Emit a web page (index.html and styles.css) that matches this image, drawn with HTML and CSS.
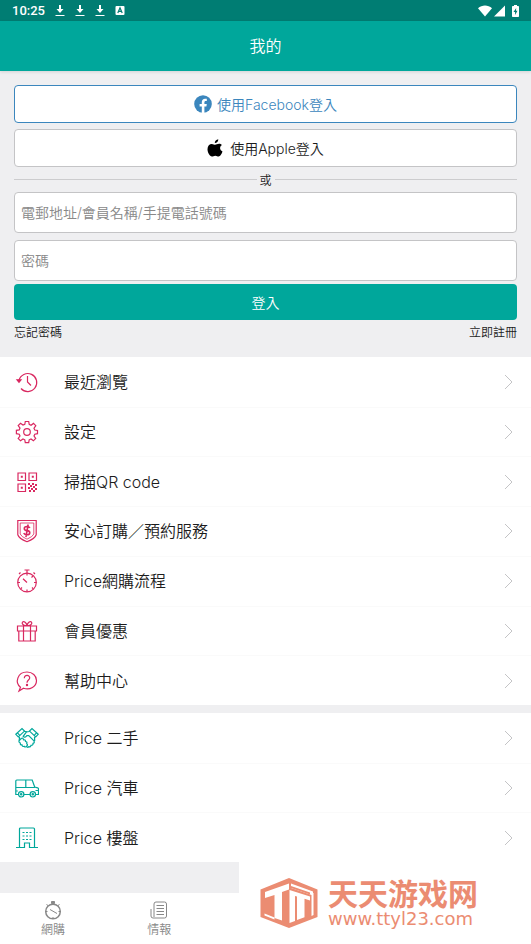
FILE: index.html
```html
<!DOCTYPE html>
<html lang="zh-Hant">
<head>
<meta charset="utf-8">
<meta name="viewport" content="width=device-width, initial-scale=1">
<title>我的</title>
<link rel="stylesheet" href="styles.css">
</head>
<body>
<div class="status">
  <div class="status-left">
    <span class="clock">10:25</span>
    <svg width="10" height="13" viewBox="0 0 10 13"><path d="M5 1v5" stroke="#fff" stroke-width="2"/><path d="M1.500 5h7L5 9z" fill="#fff"/><path d="M.5 11.500h9" stroke="#fff"/></svg>
    <svg width="10" height="13" viewBox="0 0 10 13"><path d="M5 1v5" stroke="#fff" stroke-width="2"/><path d="M1.500 5h7L5 9z" fill="#fff"/><path d="M.5 11.500h9" stroke="#fff"/></svg>
    <svg width="10" height="13" viewBox="0 0 10 13"><path d="M5 1v5" stroke="#fff" stroke-width="2"/><path d="M1.500 5h7L5 9z" fill="#fff"/><path d="M.5 11.500h9" stroke="#fff"/></svg>
    <svg width="10" height="13" viewBox="0 0 10 13"><rect x=".5" y="2" width="9" height="9" rx="1" fill="#fff"/><path d="M2.800 9 5 3.800 7.200 9M3.700 7.400h2.600" fill="none" stroke="#007d73" stroke-width="1.200"/></svg>
  </div>
  <div class="status-right">
    <svg width="14" height="12" viewBox="0 0 14 12"><path d="M0 3.200C4-.3 10-.3 14 3.200L7 11.500z" fill="#fff"/></svg>
    <svg width="12" height="12" viewBox="0 0 12 12"><path d="M11 .5v11H0z" fill="#fff"/></svg>
    <svg class="battery" width="7" height="12" viewBox="0 0 7 12"><path d="M2 0h3v1h1.200q.8 0 .8.8v9.400q0 .8-.8.8H.8Q0 12 0 11.200V1.800Q0 1 .8 1H2z" fill="#fff"/><path d="M4.200 3 1.500 7h1.600v3L5.500 5.800H4z" fill="#007d73"/></svg>
  </div>
</div>
<header class="title-bar"><h1>我的</h1></header>

<main>
  <form class="login">
    <button type="button" class="social facebook">
      <svg width="18" height="18" viewBox="0 0 18 18"><circle cx="9" cy="9" r="8.800" fill="#3b86bd"/><path d="M7.800 18v-6.400H5.600V9h2.200V7.200c0-2.300 1.300-3.500 3.300-3.500.9 0 1.700.1 1.700.1v2.100h-1c-1.100 0-1.400.7-1.400 1.400V9h2.400l-.4 2.600h-2V18z" fill="#fff"/></svg>
      <span>使用Facebook登入</span>
    </button>
    <button type="button" class="social apple">
      <svg width="16" height="18" viewBox="0 0 16 18"><path d="M11.300.2c.1 2-1.600 3.900-3.500 3.800C7.600 2.200 9.400.3 11.300.2zM14.900 6.100c-2.700 1.700-2.200 5.200.6 6.400-.7 2-2.200 5-3.900 5-1.300 0-1.700-.8-3.300-.8s-2.100.8-3.300.8C2.800 17.600.5 13.500.5 10.200c0-3.400 2.100-5.300 4.300-5.300 1.400 0 2.400.9 3.400.9.900 0 2.200-1 3.900-1 1 0 2.100.4 2.800 1.300z" fill="#000"/></svg>
      <span>使用Apple登入</span>
    </button>
    <div class="divider"><span>或</span></div>
    <input class="field" type="text" aria-label="電郵地址/會員名稱/手提電話號碼" placeholder="電郵地址/會員名稱/手提電話號碼">
    <input class="field" type="password" aria-label="密碼" placeholder="密碼">
    <button type="submit" class="submit">登入</button>
    <div class="links"><a href="#">忘記密碼</a><a href="#">立即註冊</a></div>
  </form>

  <nav class="menu account">
    <a href="#"><svg class="icon" viewBox="0 0 24 24"><path d="M4 10.500A9 9 0 1 1 6 18.500M12.500 6v6l3.500 3.500"/><path d="M2 9.800h4L4 12.300z" fill="currentColor"/></svg><span>最近瀏覽</span><svg class="chevron" viewBox="0 0 9 16"><path d="m1 1 7 7-7 7"/></svg></a>
    <a href="#"><svg class="icon" viewBox="0 0 24 24"><circle cx="12" cy="12" r="3.300"/><path d="m10.300 1.500h3.400l.5 2.900 1.800.8 2.500-1.800 2.300 2.300L19 8.200l.8 1.800 2.700.4v3.300l-2.700.5-.8 1.800 1.700 2.500-2.300 2.300L16 19l-1.800.8-.5 2.800h-3.400l-.5-2.800L8 19l-2.500 1.800-2.300-2.300L5 16l-.8-1.800-2.800-.5v-3.400l2.800-.4L5 8.100 3.200 5.600l2.300-2.300L8 5.100l1.800-.8z"/></svg><span>設定</span><svg class="chevron" viewBox="0 0 9 16"><path d="m1 1 7 7-7 7"/></svg></a>
    <a href="#"><svg class="icon" viewBox="0 0 24 24"><path d="M3 3h7.500v7.500H3zM14 3h7.500v7.500H14zM3 14h7.500v7.500H3z"/><path fill="currentColor" stroke="none" d="M5.800 5.800h2v2h-2zM16.800 5.800h2v2h-2zM5.800 16.800h2v2h-2zM13 13h2v2h-2zM17 13h2v2h-2zM20 14h2v2h-2zM15 15h2v2h-2zM18 16h2v2h-2zM13 17h2v2h-2zM16 18h2v2h-2zM20 18h2v2h-2zM14 20h2v2h-2zM18 20h2v2h-2z"/></svg><span>掃描QR code</span><svg class="chevron" viewBox="0 0 9 16"><path d="m1 1 7 7-7 7"/></svg></a>
    <a href="#"><svg class="icon" viewBox="0 0 24 24"><path d="M2.800 1.500h18.400v14.200Q20 19.500 12 22.700 4 19.500 2.800 15.700z"/><path d="M5.200 4h13.600v11Q18 17.500 12 20.200 6 17.500 5.200 15z" stroke-width=".8"/><path stroke-width="1.600" d="M15 8.800Q13.800 7.500 12 7.500c-3.600 0-3.600 3.700 0 4.100 4.100.5 3.300 4.200 0 4.200-1.600 0-2.700-.6-3.300-1.600M13.200 5.500l-2.300 12.500"/></svg><span>安心訂購／預約服務</span><svg class="chevron" viewBox="0 0 9 16"><path d="m1 1 7 7-7 7"/></svg></a>
    <a href="#"><svg class="icon" viewBox="0 0 24 24"><circle cx="12" cy="13.500" r="9.300"/><path d="M12 6.500V1M9.500 1h5M5.500 3.500 4 5M18.500 3.500 20 5M8 9.800l4 3.700M12 20.500v2.300M5 13.500H2.700M19 13.500h2.300M16.500 8.500 18 7M17 18.500l1.300 1.300M7 18.500l-1.300 1.300"/></svg><span>Price網購流程</span><svg class="chevron" viewBox="0 0 9 16"><path d="m1 1 7 7-7 7"/></svg></a>
    <a href="#"><svg class="icon" viewBox="0 0 24 24"><path d="M2.500 7h19v5h-19zM3.800 12v10h16.400V12M8.500 7v15M15.500 7v15M12 6.500C8 7 6.500 4.500 7.500 3.200 9 1.500 11.500 4 12 6.500c.5-2.500 3-5 4.500-3.300C17.500 4.500 16 7 12 6.500z"/></svg><span>會員優惠</span><svg class="chevron" viewBox="0 0 9 16"><path d="m1 1 7 7-7 7"/></svg></a>
    <a href="#"><svg class="icon" viewBox="0 0 24 24"><path d="M5.500 18.200C-.5 13.500 2.500 3 12 3c5.500 0 9.500 3.700 9.500 8.400 0 6-6.500 10.300-13 7.800L4 22z"/><path d="M9.300 9.200c0-4 5.700-3.500 5.400-.2-.2 2-2.700 2.200-2.700 4.700"/><circle cx="12" cy="16" r=".6" fill="currentColor"/></svg><span>幫助中心</span><svg class="chevron" viewBox="0 0 9 16"><path d="m1 1 7 7-7 7"/></svg></a>
  </nav>

  <nav class="menu sites">
    <a href="#"><svg class="icon" viewBox="0 0 24 24"><path d="M.8 8.300 7 2.500l2.500 2.600-6.200 5.800zM23.200 8.300 17 2.500l-2.500 2.600 6.200 5.800zM2.500 6.800l2.300 2.500M21.500 6.800l-2.300 2.500M9.500 5.500h2.200M14.300 5.500l-2.800.3-3.300 4.500q1.600 2 3.700-.7h1.800l5 5q1.500 2-.7 2.800.2 2-2 2-.4 1.800-2.200 1.300-1 1.300-2.300 0M4.500 11l-.3 3.500M19.500 11l.2 3.500-1 .5"/><path d="m4.200 14.500 2-2q2-1 2.300 1.300 2-.3 2 1.700 2 .2 1.200 2.200 1.500 1 .2 2.300-1.500 1.800-2.700.3-1.900.7-2.200-1.400-2 .1-1.700-1.900-1.900-.5-1.100-2.500z"/></svg><span>Price 二手</span><svg class="chevron" viewBox="0 0 9 16"><path d="m1 1 7 7-7 7"/></svg></a>
    <a href="#"><svg class="icon" viewBox="0 0 24 24"><path d="M3.500 18.500H.8V5q0-1 1-1h15.400l2.500 7 3 .8q.8.300.8 1.200v5.500h-3M8.700 18.500h6.600M.8 11.500h19M10.800 4v7.500M20.500 14.500h2.800M.8 15h2"/><circle cx="6.200" cy="18.300" r="2.700"/><circle cx="17.800" cy="18.300" r="2.700"/><circle cx="6.200" cy="18.300" r=".7"/><circle cx="17.800" cy="18.300" r=".7"/></svg><span>Price 汽車</span><svg class="chevron" viewBox="0 0 9 16"><path d="m1 1 7 7-7 7"/></svg></a>
    <a href="#"><svg class="icon" viewBox="0 0 24 24"><path d="M1 21.500h8.500v-4.500h5v4.500H23M4.500 21.500V3q0-1 1-1h13q1 0 1 1v18.500"/><path stroke-dasharray="2 1.500" d="M7.500 6.500h9M7.500 10h9M7.500 13.500h9"/></svg><span>Price 樓盤</span><svg class="chevron" viewBox="0 0 9 16"><path d="m1 1 7 7-7 7"/></svg></a>
  </nav>
</main>

<footer>
  <nav class="tabs">
    <a href="#"><svg width="20" height="20" viewBox="0 0 20 20"><circle cx="10" cy="11.500" r="7.300" stroke-width="1.500"/><path d="M8.500 1.500h3v2h-3z" fill="currentColor"/><path d="m3.500 4.500 1.500 1M16.500 4.500l-1.500 1M7 9.500l7 4M10 17v1.500M3 11.500h1.500M15.500 11.500H17"/></svg><span>網購</span></a>
    <a href="#"><svg width="20" height="20" viewBox="0 0 20 20"><path d="M5 17V4q0-2 2-2h8.500q2 0 2 2v12q0 2-2 2H4q-2 0-2-2V9M7.500 5.500h7.500M7.500 8.500h7.500M7.500 11.500h7.500M7.500 14.500h7.500"/></svg><span>情報</span></a>
  </nav>
  <div class="brand">
    <svg width="58" height="50" viewBox="0 0 58 50"><path d="M29 0 57.500 11.500v27.500L29 50 .5 39V11.500z" fill="#eb8c72"/><path d="M5 14 29 5.500v6L22 14v28.500L14.500 40V17L5 20z" fill="#fff"/><path d="M29.500 12 50 18.500v4l-5.500-1.700v18.500L37 42V18.500l-2-.6V43l-5.500 2z" fill="#fff"/><path d="m31 5.500 22 8v4L31 10z" fill="#fff"/><path d="m31 8 19 6.500v2L31 10z" fill="#eb8c72"/><path d="M51.500 15h2v22l-2 1z" fill="#fff"/><path d="m4.500 35.500 10 4v2l-10-4z" fill="#fff"/></svg>
    <div class="brand-text"><strong lang="zh-Hans">天天游戏网</strong><span>www.ttyl23.com</span></div>
  </div>
</footer>
</body>
</html>
```
FILE: styles.css
```css
* { box-sizing: border-box; }

body {
  margin: 0;
  min-height: 100vh;
  display: flex;
  flex-direction: column;
  background: #efeff1;
  color: #1c1c1c;
  font-family: Inter, "Noto Sans CJK TC", sans-serif;
  font-weight: 350;
}

a { color: inherit; text-decoration: none; }
svg { display: block; flex: none; }
button, input { font: inherit; margin: 0; }

.status {
  display: flex;
  align-items: center;
  justify-content: space-between;
  height: 21px;
  padding: 0 12px;
  background: #007d73;
  color: #fff;
}
.status-left { display: flex; align-items: center; gap: 10px; }
.clock { font: 500 13px/21px Roboto, sans-serif; }
.status-right { display: flex; align-items: center; gap: 2px; }
.battery { margin-left: 4px; }

.title-bar {
  height: 50px;
  background: #00a79b;
  color: #fff;
  text-align: center;
  box-shadow: 0 1px 3px rgba(0, 0, 0, .12);
}
.title-bar h1 { margin: 0; font-size: 16px; line-height: 50px; font-weight: 350; }

.login { display: flex; flex-direction: column; padding: 14px 14px 12px; }

.social {
  display: flex;
  align-items: center;
  justify-content: center;
  gap: 5px;
  height: 38px;
  padding: 0;
  margin-bottom: 6px;
  background: #fff;
  border: 1px solid #c4c4c6;
  border-radius: 4px;
  font-size: 14px;
  color: #1c1c1c;
}
.facebook { border-color: #3b86bd; color: #3b86bd; }
.apple { gap: 7px; margin-bottom: 0; }

.divider {
  display: flex;
  align-items: center;
  gap: 3px;
  height: 25px;
  font-size: 12px;
}
.divider::before, .divider::after { content: ""; flex: 1; height: 1px; background: #ccccce; }

.field {
  width: 100%;
  height: 41px;
  padding: 0 6px;
  margin-bottom: 7px;
  background: #fff;
  border: 1px solid #c4c4c6;
  border-radius: 4px;
  font-size: 14px;
}
.field::placeholder { color: #888; opacity: 1; }
.field + .submit { margin-top: -4px; }

.submit {
  height: 36px;
  border: 0;
  border-radius: 4px;
  background: #00a79b;
  color: #fff;
  font-size: 14px;
}
.links { display: flex; justify-content: space-between; font-size: 12px; line-height: 25px; }

.menu { display: grid; grid-auto-rows: 1fr; background: #fff; }
.account { min-height: 348px; margin-bottom: 8px; color: #d92860; }
.sites { min-height: 149px; color: #00a79b; }
.menu a {
  display: grid;
  grid-template-columns: 24px 1fr 9px;
  column-gap: 25px;
  align-items: center;
  padding: 0 18px 0 15px;
}
.menu a + a { border-top: 1px solid #fafafa; }
.menu span { color: #1c1c1c; font-size: 16px; line-height: 24px; }
.icon { width: 24px; height: 24px; fill: none; stroke: currentColor; stroke-width: 1.2; }
.chevron { width: 9px; height: 16px; fill: none; stroke: #c4c4c6; }

footer { position: relative; margin-top: auto; padding-top: 31px; }
.tabs {
  display: grid;
  grid-template-columns: repeat(5, 1fr);
  height: 51px;
  background: #fff;
  color: #888;
}
.tabs a { display: flex; flex-direction: column; align-items: center; padding-top: 7px; }
.tabs svg { fill: none; stroke: currentColor; }
.tabs span { font-size: 12px; line-height: 20px; }

.brand {
  position: absolute;
  top: 0;
  right: 0;
  bottom: 0;
  width: 55%;
  display: flex;
  align-items: center;
  gap: 10px;
  padding-left: 21px;
  background: #fff;
  color: #eb8c72;
}
.brand-text { display: flex; flex-direction: column; }
.brand-text strong { font: 700 30px/32px "Noto Sans CJK SC", sans-serif; }
.brand-text span { font: 400 18px/22px "DejaVu Sans", sans-serif; }
```
